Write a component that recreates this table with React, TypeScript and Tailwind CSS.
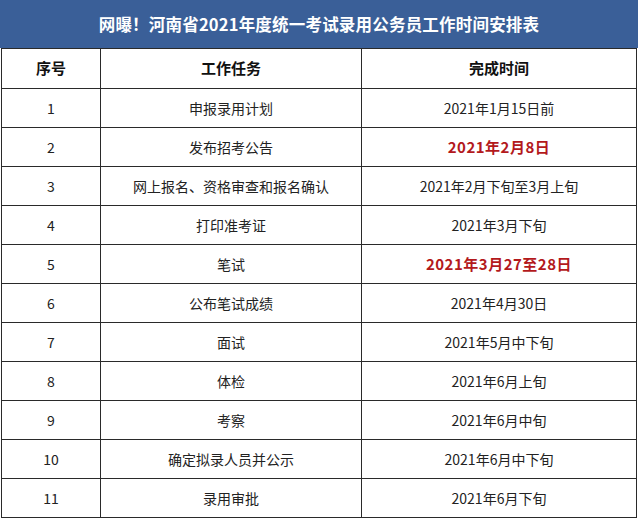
import React from 'react'

type Row = { no: string; task: string; time: string; hot?: boolean }

const ROWS: Row[] = [
  { no: '1', task: '申报录用计划', time: '2021年1月15日前' },
  { no: '2', task: '发布招考公告', time: '2021年2月8日', hot: true },
  { no: '3', task: '网上报名、资格审查和报名确认', time: '2021年2月下旬至3月上旬' },
  { no: '4', task: '打印准考证', time: '2021年3月下旬' },
  { no: '5', task: '笔试', time: '2021年3月27至28日', hot: true },
  { no: '6', task: '公布笔试成绩', time: '2021年4月30日' },
  { no: '7', task: '面试', time: '2021年5月中下旬' },
  { no: '8', task: '体检', time: '2021年6月上旬' },
  { no: '9', task: '考察', time: '2021年6月中旬' },
  { no: '10', task: '确定拟录人员并公示', time: '2021年6月中下旬' },
  { no: '11', task: '录用审批', time: '2021年6月下旬' },
]

const font = "font-['Noto_Sans_CJK_SC','Noto_Sans',sans-serif]"
const cell = 'flex items-center justify-center border-r border-b border-[#2a2a2a]'

export default function App() {
  return (
    <div className={`w-[640px] h-[518px] overflow-hidden bg-white ${font}`}>
      {/* Title band */}
      <div className="h-[48px] w-[638px] bg-[#3a5f98] flex items-center justify-center text-white font-bold text-[16.5px] tracking-[0.2px]">
        网曝！河南省2021年度统一考试录用公务员工作时间安排表
      </div>

      {/* Table */}
      <div className="ml-[1px] w-[636px] border-t border-l border-[#2a2a2a]">
        <div className="grid grid-cols-[99px_261px_275px] h-[40px] text-[15px] font-bold text-[#111]">
          <div className={cell}>序号</div>
          <div className={cell}>工作任务</div>
          <div className={cell}>完成时间</div>
        </div>
        {ROWS.map((r) => (
          <div
            key={r.no}
            className="grid grid-cols-[99px_261px_275px] h-[39px] text-[14px] text-[#222]"
          >
            <div className={cell}>{r.no}</div>
            <div className={cell}>{r.task}</div>
            <div
              className={
                r.hot
                  ? `${cell} text-[#b3191c] font-bold text-[15px] tracking-[0.5px]`
                  : cell
              }
            >
              {r.time}
            </div>
          </div>
        ))}
      </div>
    </div>
  )
}
